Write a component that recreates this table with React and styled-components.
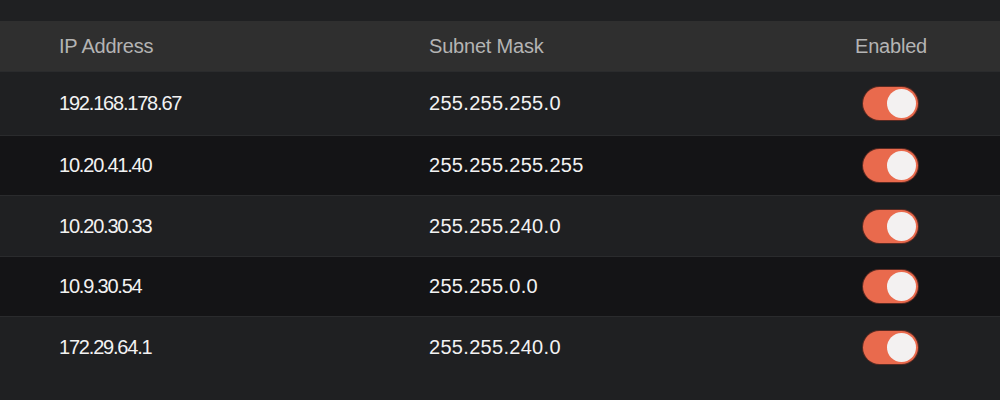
import styled, { createGlobalStyle } from 'styled-components'

const GlobalStyle = createGlobalStyle`
  html, body {
    margin: 0;
    background: #1e1f21;
    font-family: "Liberation Sans", Arial, sans-serif;
  }
`

const Page = styled.div`
  width: 1000px;
  height: 400px;
  overflow: hidden;
  background: #1f2022;
  padding-top: 21px;
  box-sizing: border-box;
`

const Table = styled.div`
  display: flex;
  flex-direction: column;
`

const HeaderRow = styled.div`
  display: grid;
  grid-template-columns: 429px 1fr 200px;
  align-items: center;
  height: 50px;
  padding-top: 1px;
  box-sizing: border-box;
  background: #2f2f2f;
  color: #b4b4b4;
  font-size: 20px;
  letter-spacing: -0.2px;
`

const Row = styled.div`
  display: grid;
  grid-template-columns: 429px 1fr 200px;
  align-items: center;
  height: ${p => p.$height}px;
  background: ${p => (p.$dark ? '#141416' : '#1f2022')};
  border-top: 1px solid #2a2b2d;
  box-sizing: border-box;
  color: #f2f2f2;
  font-size: 20px;
`

const IpCell = styled.div`
  padding-left: 59px;
  letter-spacing: -1.2px;
`

const MaskCell = styled.div`
  letter-spacing: 0.3px;
`

const HeadCell = styled.div`
  padding-left: ${p => (p.$first ? 59 : 0)}px;
  text-align: ${p => (p.$center ? 'center' : 'left')};
  padding-right: ${p => (p.$center ? 18 : 0)}px;
`

const ToggleCell = styled.div`
  display: flex;
  justify-content: center;
  padding-right: 19px;
`

const Toggle = styled.div`
  width: 55px;
  height: 33px;
  border-radius: 17px;
  background: #e96a4d;
  box-shadow: 0 0 0 1px #5a2a22;
  display: flex;
  align-items: center;
  justify-content: flex-end;
  padding: 0 2px;
  box-sizing: border-box;
`

const Knob = styled.div`
  width: 29px;
  height: 29px;
  border-radius: 50%;
  background: #f3f1f1;
`

const rows = [
  ['192.168.178.67', '255.255.255.0'],
  ['10.20.41.40', '255.255.255.255'],
  ['10.20.30.33', '255.255.240.0'],
  ['10.9.30.54', '255.255.0.0'],
  ['172.29.64.1', '255.255.240.0'],
]

const heights = [64, 60, 61, 60, 62]

export default function App() {
  return (
    <>
      <GlobalStyle />
      <Page>
        <Table>
          <HeaderRow>
            <HeadCell $first>IP Address</HeadCell>
            <HeadCell>Subnet Mask</HeadCell>
            <HeadCell $center>Enabled</HeadCell>
          </HeaderRow>
          {rows.map(([ip, mask], i) => (
            <Row key={ip} $dark={i % 2 === 1} $height={heights[i]}>
              <IpCell>{ip}</IpCell>
              <MaskCell>{mask}</MaskCell>
              <ToggleCell>
                <Toggle>
                  <Knob />
                </Toggle>
              </ToggleCell>
            </Row>
          ))}
        </Table>
      </Page>
    </>
  )
}
